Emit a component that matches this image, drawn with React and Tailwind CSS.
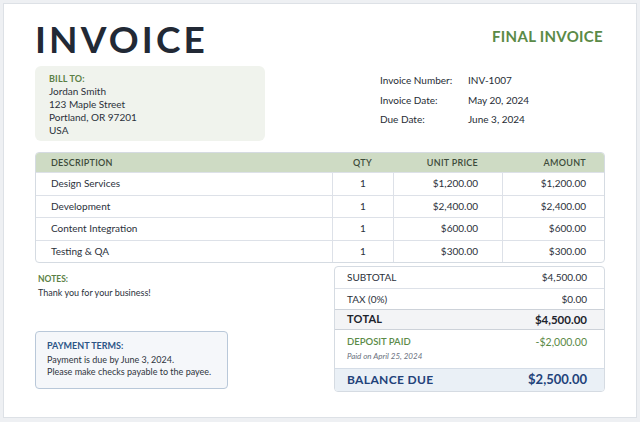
import React from "react";

const rows = [
  ["Design Services", "1", "$1,200.00", "$1,200.00"],
  ["Development", "1", "$2,400.00", "$2,400.00"],
  ["Content Integration", "1", "$600.00", "$600.00"],
  ["Testing & QA", "1", "$300.00", "$300.00"],
];

export default function App() {
  return (
    <div className="w-[640px] h-[422px] bg-[#eef0f3] p-[3px] font-['Lato',sans-serif] text-[#2b313b]">
      <div className="h-[415px] bg-white border border-[#dde1e6] px-[31px]">
        {/* header */}
        <div className="flex justify-between items-start pt-[16px]">
          <h1 className="text-[37px] leading-[37px] font-bold tracking-[0.085em] text-[#222935]">INVOICE</h1>
          <div className="mt-[6px] pr-[2px] text-[15px] leading-[20px] font-bold tracking-[0.02em] text-[#5b8a47]">FINAL INVOICE</div>
        </div>

        {/* bill to + meta */}
        <div className="flex items-start mt-[9px]">
          <div className="w-[230px] h-[75px] bg-[#f0f3ed] rounded-[6px] pl-[14px] pt-[6px] text-[10px] leading-[13px]">
            <div className="text-[9px] font-bold text-[#5b7f45] tracking-[0.02em]">BILL TO:</div>
            <div>Jordan Smith</div>
            <div>123 Maple Street</div>
            <div>Portland, OR 97201</div>
            <div>USA</div>
          </div>
          <div className="ml-[115px] pt-[5px] grid grid-cols-[88px_auto] text-[10px] leading-[19.5px] text-[#262c35]">
            <div>Invoice Number:</div><div>INV-1007</div>
            <div>Invoice Date:</div><div>May 20, 2024</div>
            <div>Due Date:</div><div>June 3, 2024</div>
          </div>
        </div>

        {/* table */}
        <div className="mt-[11px] border border-[#d5dbe2] rounded-[4px] overflow-hidden">
          <div className="grid grid-cols-[296px_61px_109px_101px] h-[19px] items-center bg-[#cedbc4] text-[9px] font-semibold tracking-[0.03em] text-[#3d4b3a]">
            <div className="pl-[15px]">DESCRIPTION</div>
            <div className="text-center">QTY</div>
            <div className="text-right pr-[24px]">UNIT PRICE</div>
            <div className="text-right pr-[17px]">AMOUNT</div>
          </div>
          {rows.map((r, i) => (
            <div key={i} className="grid grid-cols-[296px_61px_109px_101px] h-[22.5px] border-t border-[#dde1e8] text-[10px]">
              <div className="pl-[15px] flex items-center">{r[0]}</div>
              <div className="flex items-center justify-center border-l border-[#dde1e8]">{r[1]}</div>
              <div className="flex items-center justify-end pr-[24px] border-l border-[#dde1e8]">{r[2]}</div>
              <div className="flex items-center justify-end pr-[17px] border-l border-[#dde1e8]">{r[3]}</div>
            </div>
          ))}
        </div>

        {/* bottom */}
        <div className="flex justify-between mt-[3px]">
          <div className="w-[193px]">
            <div className="pl-[3px] pt-[7px] text-[8.5px] leading-[12px] font-bold text-[#5b7f45]">NOTES:</div>
            <div className="pl-[3px] mt-[2px] text-[9px] leading-[12px] text-[#2b313b]">Thank you for your business!</div>
            <div className="mt-[32px] h-[58px] border border-[#b9c8d9] bg-[#f5f7fa] rounded-[4px] pl-[11px] pt-[7px]">
              <div className="text-[9px] leading-[13px] font-bold text-[#2c5587]">PAYMENT TERMS:</div>
              <div className="mt-[2px] text-[9px] leading-[12px] text-[#2f3540]">Payment is due by June 3, 2024.</div>
              <div className="text-[9px] leading-[12px] text-[#2f3540]">Please make checks payable to the payee.</div>
            </div>
          </div>

          <div className="w-[271px] h-[126px] border border-[#d5dbe2] rounded-[4px] overflow-hidden flex flex-col text-[10px]">
            <div className="h-[21px] flex items-center justify-between pl-[12px] pr-[17px]">
              <span>SUBTOTAL</span><span>$4,500.00</span>
            </div>
            <div className="h-[21px] flex items-center justify-between pl-[12px] pr-[17px] border-t border-[#dde1e8]">
              <span>TAX (0%)</span><span>$0.00</span>
            </div>
            <div className="h-[21px] flex items-center justify-between pl-[12px] pr-[17px] border-y border-[#cdd2d9] bg-[#f3f4f6] font-bold text-[#1d232c]">
              <span className="text-[11px] tracking-[0.02em]">TOTAL</span><span className="text-[11.5px]">$4,500.00</span>
            </div>
            <div className="h-[38px] pl-[12px] pr-[17px] pt-[5px]">
              <div className="flex justify-between items-center leading-[14px]">
                <span className="text-[9.5px] font-semibold text-[#5b8a47]">DEPOSIT PAID</span>
                <span className="text-[10.5px] text-[#5b8a47]">-$2,000.00</span>
              </div>
              <div className="text-[8px] italic leading-[14px] text-[#6b7280]">Paid on April 25, 2024</div>
            </div>
            <div className="flex-1 flex items-center justify-between pl-[12px] pr-[17px] border-t border-[#d5dde7] bg-[#eaf0f6] font-bold text-[#22427a]">
              <span className="text-[12px] tracking-[0.03em]">BALANCE DUE</span><span className="text-[13px]">$2,500.00</span>
            </div>
          </div>
        </div>
      </div>
    </div>
  );
}
